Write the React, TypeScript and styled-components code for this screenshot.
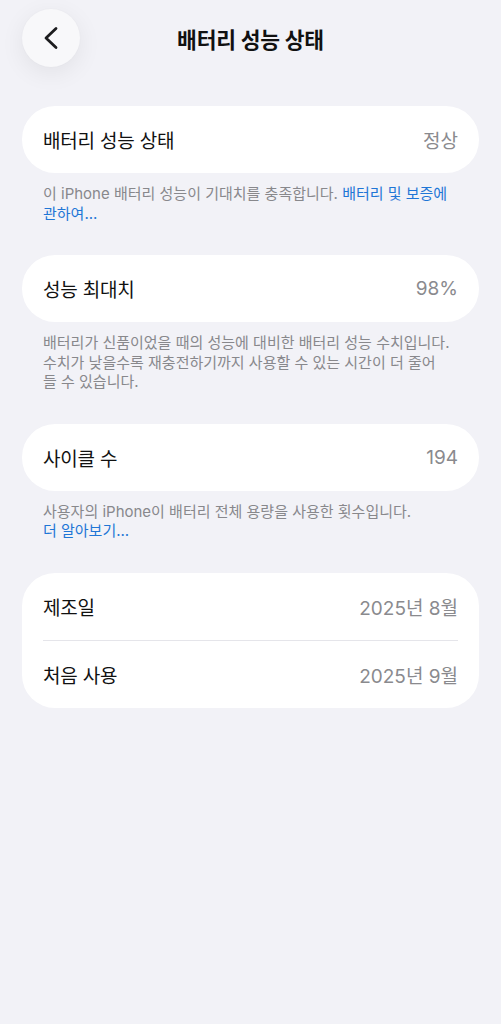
import React from "react";
import styled, { createGlobalStyle } from "styled-components";

const GlobalStyle = createGlobalStyle`
  html, body {
    margin: 0;
    padding: 0;
    background: #f2f2f7;
  }
  body {
    font-family: "Inter", "Noto Sans CJK KR", "Noto Sans", sans-serif;
    -webkit-font-smoothing: antialiased;
  }
`;

const Page = styled.div`
  min-height: 1024px;
  background: #f2f2f7;
  padding: 9px 22px 40px;
  box-sizing: border-box;
`;

const Header = styled.header`
  display: grid;
  grid-template-columns: 58px 1fr 58px;
  align-items: center;
  height: 58px;
  margin-bottom: 39px;
`;

const BackButton = styled.button`
  width: 58px;
  height: 58px;
  border-radius: 50%;
  border: none;
  padding: 0;
  background: #f8f8fa;
  box-shadow: 0 6px 24px rgba(0, 0, 0, 0.07), 0 0 2px rgba(0, 0, 0, 0.03);
  display: flex;
  align-items: center;
  justify-content: center;
  cursor: pointer;
`;

const Title = styled.h1`
  margin: 0;
  text-align: center;
  font-size: 21.5px;
  font-weight: 700;
  color: #111;
  letter-spacing: -0.2px;
`;

const Section = styled.section`
  margin-bottom: 32px;
`;

const Card = styled.div`
  background: #fff;
  border-radius: 33px;
  padding: 0 21px;
`;

const Row = styled.div`
  display: flex;
  align-items: center;
  justify-content: space-between;
  height: 67px;
  font-size: 19px;
`;

const Divider = styled.div`
  height: 1px;
  background: #e5e5ea;
`;

const Label = styled.span`
  color: #111;
  letter-spacing: -0.2px;
`;

const Value = styled.span`
  color: #8a8a8e;
  letter-spacing: 0;
`;

const Footer = styled.p`
  margin: 0;
  padding: 11px 21px 0;
  font-size: 15px;
  line-height: 19.5px;
  color: #88888c;
  letter-spacing: 0;
  word-break: keep-all;
`;

const Link = styled.a<{ $block?: boolean }>`
  color: #1f76d6;
  text-decoration: none;
  display: ${(p) => (p.$block ? "block" : "inline")};
`;

const Chevron = () => (
  <svg width="16" height="24" viewBox="0 0 16 24" fill="none">
    <path
      d="M13 2.5L3 12l10 9.5"
      stroke="#1c1c1e"
      strokeWidth="2.8"
      strokeLinecap="round"
      strokeLinejoin="round"
    />
  </svg>
);

export default function App() {
  return (
    <>
      <GlobalStyle />
      <Page>
        <Header>
          <BackButton aria-label="뒤로">
            <Chevron />
          </BackButton>
          <Title>배터리 성능 상태</Title>
          <span />
        </Header>

        <Section>
          <Card>
            <Row>
              <Label>배터리 성능 상태</Label>
              <Value>정상</Value>
            </Row>
          </Card>
          <Footer>
            이 iPhone 배터리 성능이 기대치를 충족합니다.{" "}
            <Link href="#">배터리 및 보증에 관하여...</Link>
          </Footer>
        </Section>

        <Section>
          <Card>
            <Row>
              <Label>성능 최대치</Label>
              <Value>98%</Value>
            </Row>
          </Card>
          <Footer>
            배터리가 신품이었을 때의 성능에 대비한 배터리 성능 수치입니다.
            수치가 낮을수록 재충전하기까지 사용할 수 있는 시간이 더 줄어
            <br />들 수 있습니다.
          </Footer>
        </Section>

        <Section>
          <Card>
            <Row>
              <Label>사이클 수</Label>
              <Value>194</Value>
            </Row>
          </Card>
          <Footer>
            사용자의 iPhone이 배터리 전체 용량을 사용한 횟수입니다.
            <Link href="#" $block>
              더 알아보기...
            </Link>
          </Footer>
        </Section>

        <Section>
          <Card>
            <Row>
              <Label>제조일</Label>
              <Value>2025년 8월</Value>
            </Row>
            <Divider />
            <Row>
              <Label>처음 사용</Label>
              <Value>2025년 9월</Value>
            </Row>
          </Card>
        </Section>
      </Page>
    </>
  );
}
